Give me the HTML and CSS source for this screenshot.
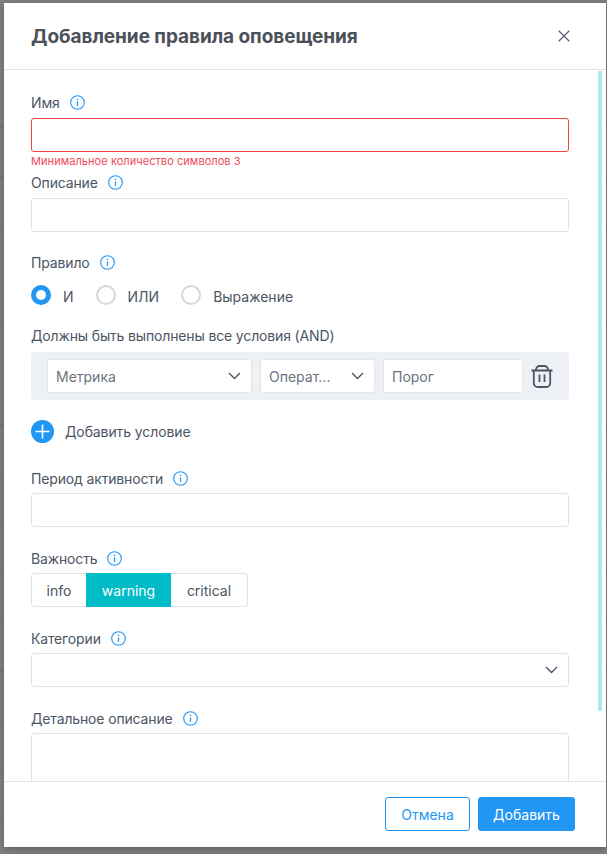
FILE: index.html
```html
<!DOCTYPE html>
<html lang="ru">

<head>
    <meta charset="UTF-8">
    <title>Добавление правила оповещения</title>
    <link rel="stylesheet" href="styles.css">
</head>

<body>
    <div class="modal">
        <header class="modal-header">
            <h2>Добавление правила оповещения</h2>
            <svg class="close-icon" viewBox="0 0 12 12"><path d="M.7.7l10.6 10.6M11.3.7L.7 11.3"/></svg>
        </header>

        <div class="modal-body">
            <div class="scrollbar"></div>

            <div class="field field-first">
                <label class="label">Имя <svg class="info"><use href="#info"/></svg></label>
                <div class="input input-error"></div>
                <div class="error-text">Минимальное количество символов 3</div>
            </div>

            <div class="field field-after-error">
                <label class="label">Описание <svg class="info"><use href="#info"/></svg></label>
                <div class="input"></div>
            </div>

            <div class="field field-rule">
                <label class="label">Правило <svg class="info"><use href="#info"/></svg></label>
                <div class="radios">
                    <div class="radio radio-checked"><span class="dot"></span><span class="radio-text">И</span></div>
                    <div class="radio"><span class="dot"></span><span class="radio-text">ИЛИ</span></div>
                    <div class="radio"><span class="dot"></span><span class="radio-text">Выражение</span></div>
                </div>
            </div>

            <div class="conditions">
                <div class="label">Должны быть выполнены все условия (AND)</div>
                <div class="condition-row">
                    <div class="input select select-metric"><span>Метрика</span><svg class="chevron"><use href="#chevron"/></svg></div>
                    <div class="input select select-op"><span>Операт...</span><svg class="chevron"><use href="#chevron"/></svg></div>
                    <div class="input select-threshold"><span>Порог</span></div>
                    <svg class="trash" viewBox="0 0 22 23">
                        <path d="M.5 5.500h21M5 5.500V4.500a3.500 3.500 0 0 1 3.500-3.500h5A3.500 3.500 0 0 1 17 4.500v1M2.800 5.500V18a4 4 0 0 0 4 4h8.400a4 4 0 0 0 4-4V5.500M8.500 9.500v7.500M13.500 9.500v7.500"/>
                    </svg>
                </div>
            </div>

            <div class="add-condition">
                <svg class="plus" viewBox="0 0 23 23"><circle cx="11.500" cy="11.500" r="11.500"/><path d="M11.500 4.500v14M4.500 11.500h14"/></svg>
                <span>Добавить условие</span>
            </div>

            <div class="field field-period">
                <label class="label">Период активности <svg class="info"><use href="#info"/></svg></label>
                <div class="input"></div>
            </div>

            <div class="field">
                <label class="label">Важность <svg class="info"><use href="#info"/></svg></label>
                <div class="segments">
                    <div class="segment seg-info">info</div>
                    <div class="segment seg-warning">warning</div>
                    <div class="segment seg-critical">critical</div>
                </div>
            </div>

            <div class="field">
                <label class="label">Категории <svg class="info"><use href="#info"/></svg></label>
                <div class="input select"><span></span><svg class="chevron"><use href="#chevron"/></svg></div>
            </div>

            <div class="field">
                <label class="label">Детальное описание <svg class="info"><use href="#info"/></svg></label>
                <div class="textarea"></div>
            </div>
        </div>

        <footer class="modal-footer">
            <button type="button" class="btn btn-cancel">Отмена</button>
            <button type="button" class="btn btn-primary">Добавить</button>
        </footer>
    </div>

    <svg class="defs" width="0" height="0">
        <symbol id="info" viewBox="0 0 15 15">
            <circle cx="7.500" cy="7.500" r="6.800" fill="none" stroke="#2196f3" stroke-width="1.100"/>
            <path d="M7.500 6.500v4.300" stroke="#2196f3" stroke-width="1.300"/>
            <circle cx="7.500" cy="4.500" r=".8" fill="#2196f3"/>
        </symbol>
        <symbol id="chevron" viewBox="0 0 13 8">
            <path d="M1 1l5.500 5.500L12 1" fill="none" stroke="#4b5563" stroke-width="1.400"/>
        </symbol>
    </svg>
</body>

</html>
```

FILE: styles.css
```css
* {
    box-sizing: border-box;
}

html,
body {
    height: 854px;
}

body {
    margin: 0;
    padding: 3px 1px 7px 4px;
    overflow: hidden;
    font-family: "Inter", "Noto Sans", sans-serif;
    font-size: 14px;
    color: #4b5563;
    background-color: #808080;
    background-image: repeating-linear-gradient(to bottom, transparent 0, transparent 48.500px, #737373 48.500px, #737373 49.500px);
    background-position: 0 29px;
}

.defs {
    position: absolute;
}

.modal {
    display: flex;
    flex-direction: column;
    height: 844px;
    background: #fff;
    box-shadow: 0 2px 8px rgba(0, 0, 0, 0.25);
}

.modal-header {
    flex: none;
    height: 67px;
    padding: 0 36px 0 27px;
    display: flex;
    align-items: center;
    justify-content: space-between;
    border-bottom: 1px solid #e2e3e8;
}

.modal-header h2 {
    margin: 0;
    font-size: 19px;
    font-weight: 700;
    letter-spacing: -0.06px;
    color: #4b5159;
}

.close-icon {
    width: 12px;
    height: 12px;
    fill: none;
    stroke: #5b6470;
    stroke-width: 1.300;
}

.modal-body {
    position: relative;
    flex: 1;
    min-height: 0;
    overflow: hidden;
    padding: 0 37px 0 27px;
}

.scrollbar {
    position: absolute;
    top: 1px;
    right: 4px;
    width: 4px;
    height: 640px;
    background: #aee9ea;
}

.field {
    margin-top: 21px;
}

.field-first {
    margin-top: 22px;
}

.field-after-error {
    margin-top: 3px;
}

.field-rule {
    margin-top: 20px;
}

.field-period {
    margin-top: 25px;
}

.label {
    display: flex;
    align-items: center;
    gap: 9px;
    height: 20px;
    margin-bottom: 5px;
    font-size: 14px;
    letter-spacing: -0.15px;
    color: #4b5563;
}

.field-first .label,
.field-after-error .label {
    margin-bottom: 6px;
}

.info {
    width: 15px;
    height: 15px;
    margin-left: 1px;
}

.input,
.textarea {
    height: 34px;
    background: #fff;
    border: 1px solid #e2e3ea;
    border-radius: 3px;
}

.textarea {
    height: 80px;
}

.input-error {
    border-color: #ef4444;
}

.error-text {
    height: 16px;
    margin-top: 1px;
    font-size: 11px;
    letter-spacing: 0.06px;
    line-height: 16px;
    color: #f2495a;
}

.radios {
    display: flex;
    align-items: center;
    gap: 22px;
    height: 20px;
    margin-top: 13px;
}

.radio {
    display: flex;
    align-items: center;
    gap: 12px;
}

.radio-text {
    padding-top: 3px;
}

.dot {
    width: 20px;
    height: 20px;
    border: 2px solid #d3d7dd;
    border-radius: 50%;
}

.radio-checked .dot {
    border: 5px solid #2196f3;
}

.conditions {
    margin-top: 20px;
}

.conditions .label {
    margin-bottom: 7px;
}

.condition-row {
    display: flex;
    align-items: center;
    height: 48px;
    padding: 0 16px;
    gap: 8px;
    background: #edf0f5;
    border-radius: 4px;
}

.select {
    display: flex;
    align-items: center;
    justify-content: space-between;
    padding: 0 10px 0 8px;
}

.condition-row .input {
    flex: none;
    color: #6b7280;
    border-color: #e2e5ea;
}

.select-metric {
    width: 205px;
}

.select-op {
    width: 115px;
}

.select-threshold {
    display: flex;
    align-items: center;
    width: 140px;
    padding: 0 8px;
}

.chevron {
    width: 13px;
    height: 8px;
}

.trash {
    flex: none;
    width: 22px;
    height: 23px;
    fill: none;
    stroke: #4b5563;
    stroke-width: 1.800;
}

.add-condition {
    display: flex;
    align-items: center;
    gap: 11px;
    margin-top: 20px;
    height: 23px;
    letter-spacing: -0.1px;
}

.plus {
    width: 23px;
    height: 23px;
}

.plus circle {
    fill: #2196f3;
}

.plus path {
    stroke: #fff;
    stroke-width: 1.600;
    fill: none;
}

.segments {
    display: inline-flex;
    height: 34px;
    border: 1px solid #e2e3ea;
    border-radius: 3px;
}

.segment {
    display: flex;
    align-items: center;
    justify-content: center;
}

.seg-info {
    width: 54px;
}

.seg-warning {
    width: 85px;
    margin: -1px 0;
    color: #fff;
    background: #00bcc6;
}

.seg-critical {
    width: 76px;
}

.modal-footer {
    flex: none;
    height: 66px;
    padding: 15px 31px 0 0;
    display: flex;
    justify-content: flex-end;
    gap: 8px;
    border-top: 1px solid #e2e3e8;
}

.btn {
    height: 34px;
    font-family: inherit;
    font-size: 14px;
    border-radius: 3px;
    border: 1px solid #2196f3;
}

.btn-cancel {
    width: 85px;
    color: #2196f3;
    background: #fff;
}

.btn-primary {
    width: 97px;
    color: #fff;
    background: #2196f3;
}
```
